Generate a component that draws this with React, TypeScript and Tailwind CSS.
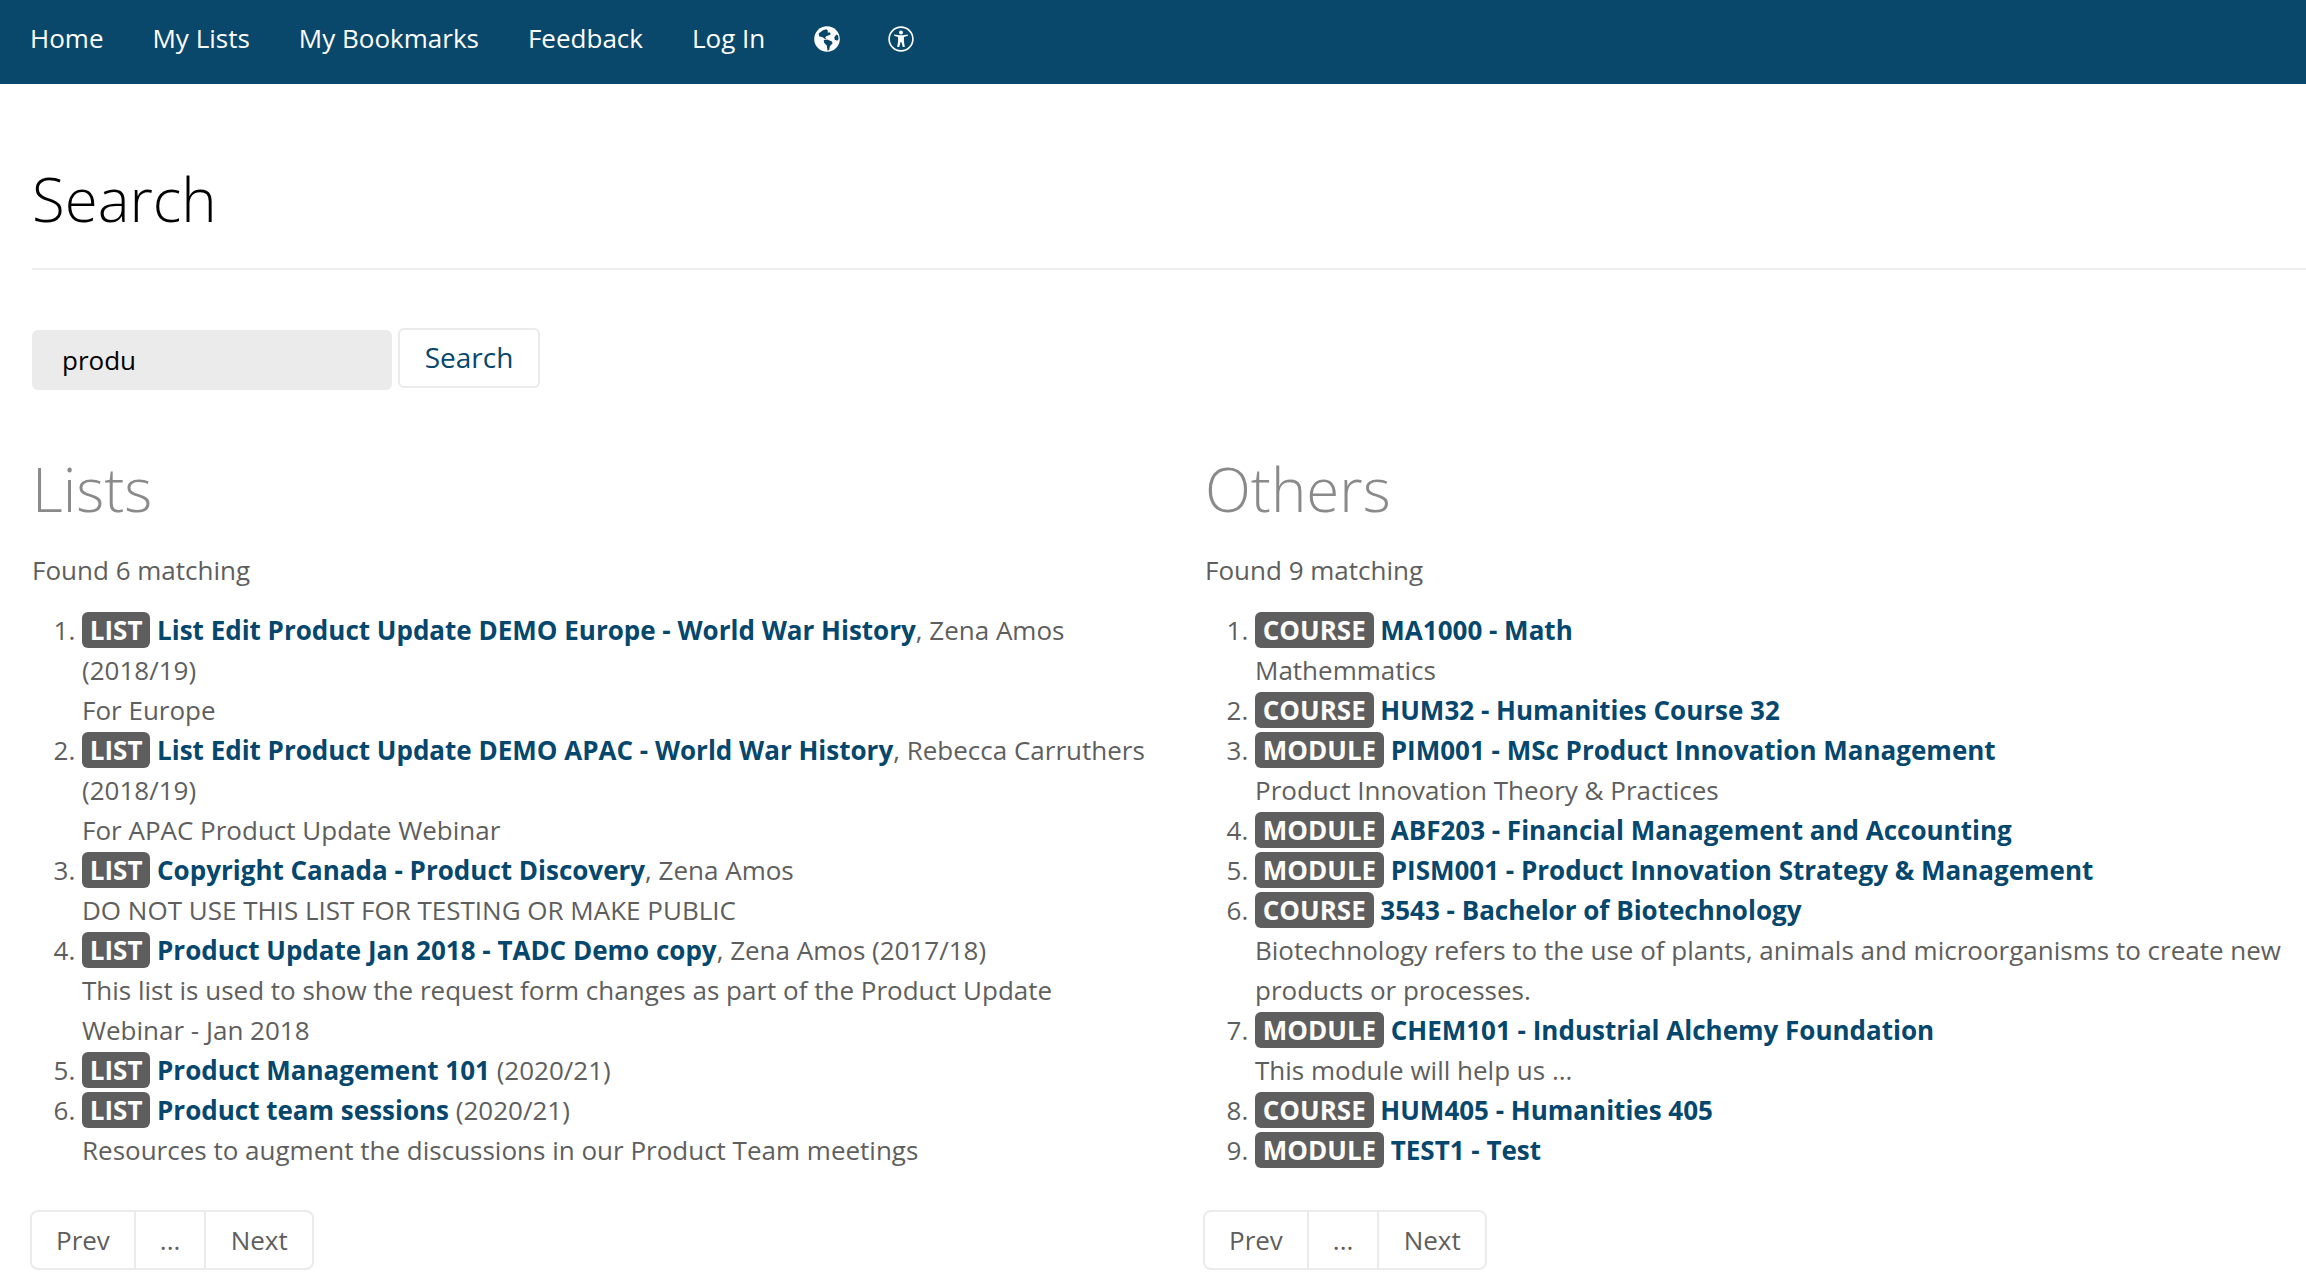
type Result = {
   kind: 'LIST' | 'COURSE' | 'MODULE'
   title: string
   meta?: string
   description?: string
}

const navItems = ['Home', 'My Lists', 'My Bookmarks', 'Feedback', 'Log In']

const lists: Result[] = [
   {
      kind: 'LIST',
      title: 'List Edit Product Update DEMO Europe - World War History',
      meta: ', Zena Amos (2018/19)',
      description: 'For Europe',
   },
   {
      kind: 'LIST',
      title: 'List Edit Product Update DEMO APAC - World War History',
      meta: ', Rebecca Carruthers (2018/19)',
      description: 'For APAC Product Update Webinar',
   },
   {
      kind: 'LIST',
      title: 'Copyright Canada - Product Discovery',
      meta: ', Zena Amos',
      description: 'DO NOT USE THIS LIST FOR TESTING OR MAKE PUBLIC',
   },
   {
      kind: 'LIST',
      title: 'Product Update Jan 2018 - TADC Demo copy',
      meta: ', Zena Amos (2017/18)',
      description:
         'This list is used to show the request form changes as part of the Product Update Webinar - Jan 2018',
   },
   { kind: 'LIST', title: 'Product Management 101', meta: ' (2020/21)' },
   {
      kind: 'LIST',
      title: 'Product team sessions',
      meta: ' (2020/21)',
      description: 'Resources to augment the discussions in our Product Team meetings',
   },
]

const others: Result[] = [
   { kind: 'COURSE', title: 'MA1000 - Math', description: 'Mathemmatics' },
   { kind: 'COURSE', title: 'HUM32 - Humanities Course 32' },
   {
      kind: 'MODULE',
      title: 'PIM001 - MSc Product Innovation Management',
      description: 'Product Innovation Theory & Practices',
   },
   { kind: 'MODULE', title: 'ABF203 - Financial Management and Accounting' },
   { kind: 'MODULE', title: 'PISM001 - Product Innovation Strategy & Management' },
   {
      kind: 'COURSE',
      title: '3543 - Bachelor of Biotechnology',
      description:
         'Biotechnology refers to the use of plants, animals and microorganisms to create new products or processes.',
   },
   {
      kind: 'MODULE',
      title: 'CHEM101 - Industrial Alchemy Foundation',
      description: 'This module will help us ...',
   },
   { kind: 'COURSE', title: 'HUM405 - Humanities 405' },
   { kind: 'MODULE', title: 'TEST1 - Test' },
]

const GlobeIcon = () => (
   <svg viewBox="0 0 26 26" className="size-[26px]" aria-hidden="true">
      <circle cx="13" cy="13" r="12.8" fill="#fff" />
      <g fill="#0a486b">
         <path d="M4.6 7.4 9 4.2l3.2-1 1.7 1.2-.3 2.2 2.5-.2.6 2.2-3.9 1.5-1.7 1.2 1.2 1.4-1.4.2-2.6-2-3-.5z" />
         <path d="m9.8 14 3.4-.4 4.8 1.9.6 1.7-2.7 3-.6 3.6-1.7 1-.9-5.2L10 16.4z" />
         <path d="m20.3 11.6 2-3.2 1.8 1.2.5 3.4-1.4 1.7-2.5-1z" />
      </g>
   </svg>
)

const AccessibilityIcon = () => (
   <svg viewBox="0 0 26 26" className="size-[26px]" aria-hidden="true">
      <circle cx="13" cy="13" r="11.9" fill="none" stroke="#fff" strokeWidth="1.6" />
      <circle cx="13" cy="6.5" r="2" fill="#fff" />
      <path
         fill="#fff"
         d="M6.2 8.5 11.4 9.3h3.2l5.2-.8.1 1.2-4 1.2v4.3l.9 5.7h-2L13.4 16h-.8l-1.4 4.9h-2l.9-5.7v-4.3l-4-1.2z"
      />
   </svg>
)

const ResultItem = ({ kind, title, meta, description }: Result) => (
   <li>
      <span className="rounded-[6px] bg-[#5e5e5e] px-[7.8px] font-bold text-white">{kind}</span>{' '}
      <a href="#" className="font-bold text-[#05476d]">
         {title}
      </a>
      {meta}
      {description && <div>{description}</div>}
   </li>
)

const Pager = () => (
   <div className="mt-[40px] -ml-[2px] flex h-[60px] w-[284px] divide-x-2 divide-[#ebebeb] rounded-[8px] border-2 border-[#ebebeb]">
      <button className="px-[24px] leading-[56px]">Prev</button>
      <button className="px-[24px] leading-[56px]">...</button>
      <button className="flex-1 leading-[56px]">Next</button>
   </div>
)

const ResultColumn = ({ heading, results }: { heading: string; results: Result[] }) => (
   <section>
      <h2 className="text-[60px] leading-[66px] font-light text-[#8a8a8a]">{heading}</h2>
      <p className="mt-[28px]">Found {results.length} matching</p>
      <ol className="mt-[20px] list-decimal pl-[50px]">
         {results.map((result) => (
            <ResultItem key={result.title} {...result} />
         ))}
      </ol>
      <Pager />
   </section>
)

export default function App() {
   return (
      <div className="h-[1282px] w-full overflow-hidden bg-white font-['Open_Sans',sans-serif] text-[26px] leading-[40px] text-[#5e5e5e]">
         <nav className="flex h-[84px] items-start gap-[49px] bg-[#0a486b] pt-[18px] pl-[30px] text-white">
            {navItems.map((item) => (
               <a key={item} href="#">
                  {item}
               </a>
            ))}
            <a href="#" aria-label="Language" className="pt-[8px]">
               <GlobeIcon />
            </a>
            <a href="#" aria-label="Accessibility" className="-ml-px pt-[8px]">
               <AccessibilityIcon />
            </a>
         </nav>

         <main className="pl-[32px]">
            <h1 className="mt-[82px] border-b-2 border-[#eeeeee] pb-[36px] text-[60px] leading-[66px] font-light text-black">
               Search
            </h1>

            <form className="mt-[58px] flex gap-[6px]">
               <input
                  defaultValue="produ"
                  className="mt-[2px] h-[60px] w-[360px] rounded-[6px] bg-[#ebebeb] px-[30px] text-[26px] text-black"
               />
               <button
                  type="button"
                  className="h-[60px] w-[142px] rounded-[6px] border-2 border-[#ebebeb] pb-[2px] text-[28px] leading-[54px] text-[#05476d]"
               >
                  Search
               </button>
            </form>

            <div className="mt-[66px] grid grid-cols-[1114px_1100px] gap-[59px]">
               <ResultColumn heading="Lists" results={lists} />
               <ResultColumn heading="Others" results={others} />
            </div>
         </main>
      </div>
   )
}
